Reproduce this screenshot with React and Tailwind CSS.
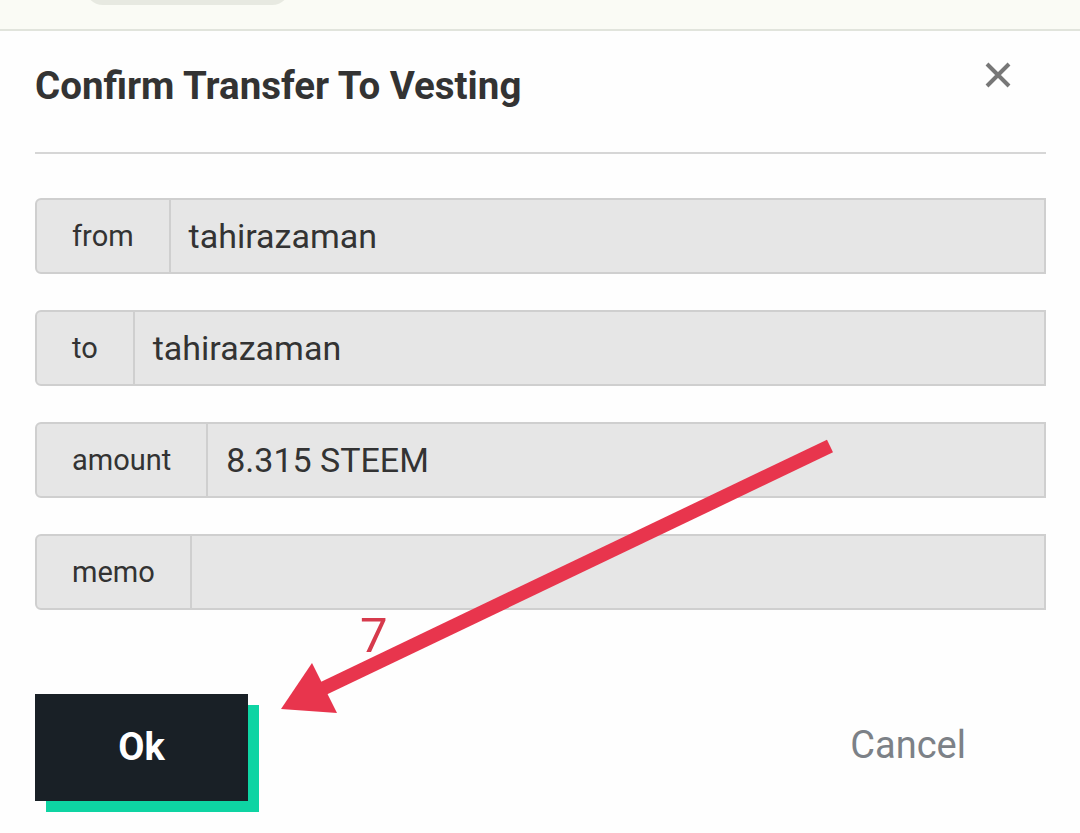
import React from 'react';

const rows = [
  { label: 'from', value: 'tahirazaman' },
  { label: 'to', value: 'tahirazaman' },
  { label: 'amount', value: '8.315 STEEM' },
  { label: 'memo', value: '' },
];

const App = () => {
  return (
    <div className="relative w-[1080px] h-[833px] overflow-hidden bg-[#fefefe] font-['Roboto',sans-serif] text-[#333]">
      {/* top strip of the page behind the dialog */}
      <div className="relative h-[31px] bg-[#fafbf5] border-b-2 border-[#e1e4dc]">
        <div className="absolute left-[85px] top-[-20px] w-[205px] h-[25px] rounded-b-[18px] bg-[#e7e9e1]"></div>
      </div>

      <div className="pl-[35px] pr-[34px]">
        <div className="flex items-center justify-between h-[110px]">
          <h1 className="text-[38.5px] font-bold text-[#333]">
            Confirm Transfer To Vesting
          </h1>
          <button className="mr-[34px] mt-[-22px] text-[#777]">
            <svg width="28" height="28" viewBox="0 0 28 28">
              <path d="M3 3 L25 25 M25 3 L3 25" stroke="#777" strokeWidth="4" />
            </svg>
          </button>
        </div>

        <div className="mt-[11px] h-[2px] bg-[#d6d6d6]"></div>

        <div className="mt-[44px] flex flex-col gap-[36px]">
          {rows.map((row) => (
            <div key={row.label} className="flex h-[76px] border-2 border-[#cfcfcf] rounded-l-[6px] bg-[#e6e6e6]">
              <div className="flex items-center pt-[1px] px-[35px] border-r-2 border-[#cfcfcf] text-[29px] text-[#333]">
                {row.label}
              </div>
              <div className="flex-1 flex items-center pl-[18px] text-[34px] text-[#333]">
                {row.value}
              </div>
            </div>
          ))}
        </div>

        <div className="mt-[84px] flex items-center justify-between">
          <button className="w-[213px] h-[107px] bg-[#192026] text-white text-[38px] font-bold shadow-[11px_11px_0_#0ed4a3]">
            Ok
          </button>
          <button className="mr-[80px] mt-[-4px] text-[38px] text-[#7c8187]">
            Cancel
          </button>
        </div>
      </div>

      {/* annotation overlay */}
      <svg className="absolute inset-0 pointer-events-none" width="1080" height="833">
        <line x1="830" y1="446" x2="318" y2="691" stroke="#e8354d" strokeWidth="14" />
        <polygon points="281,709 312,663 337,713" fill="#e8354d" />
      </svg>
      <div className="absolute left-[360px] top-[611px] text-[49px] text-[#d63a4c] leading-none">
        7
      </div>
    </div>
  );
};

export default App;
